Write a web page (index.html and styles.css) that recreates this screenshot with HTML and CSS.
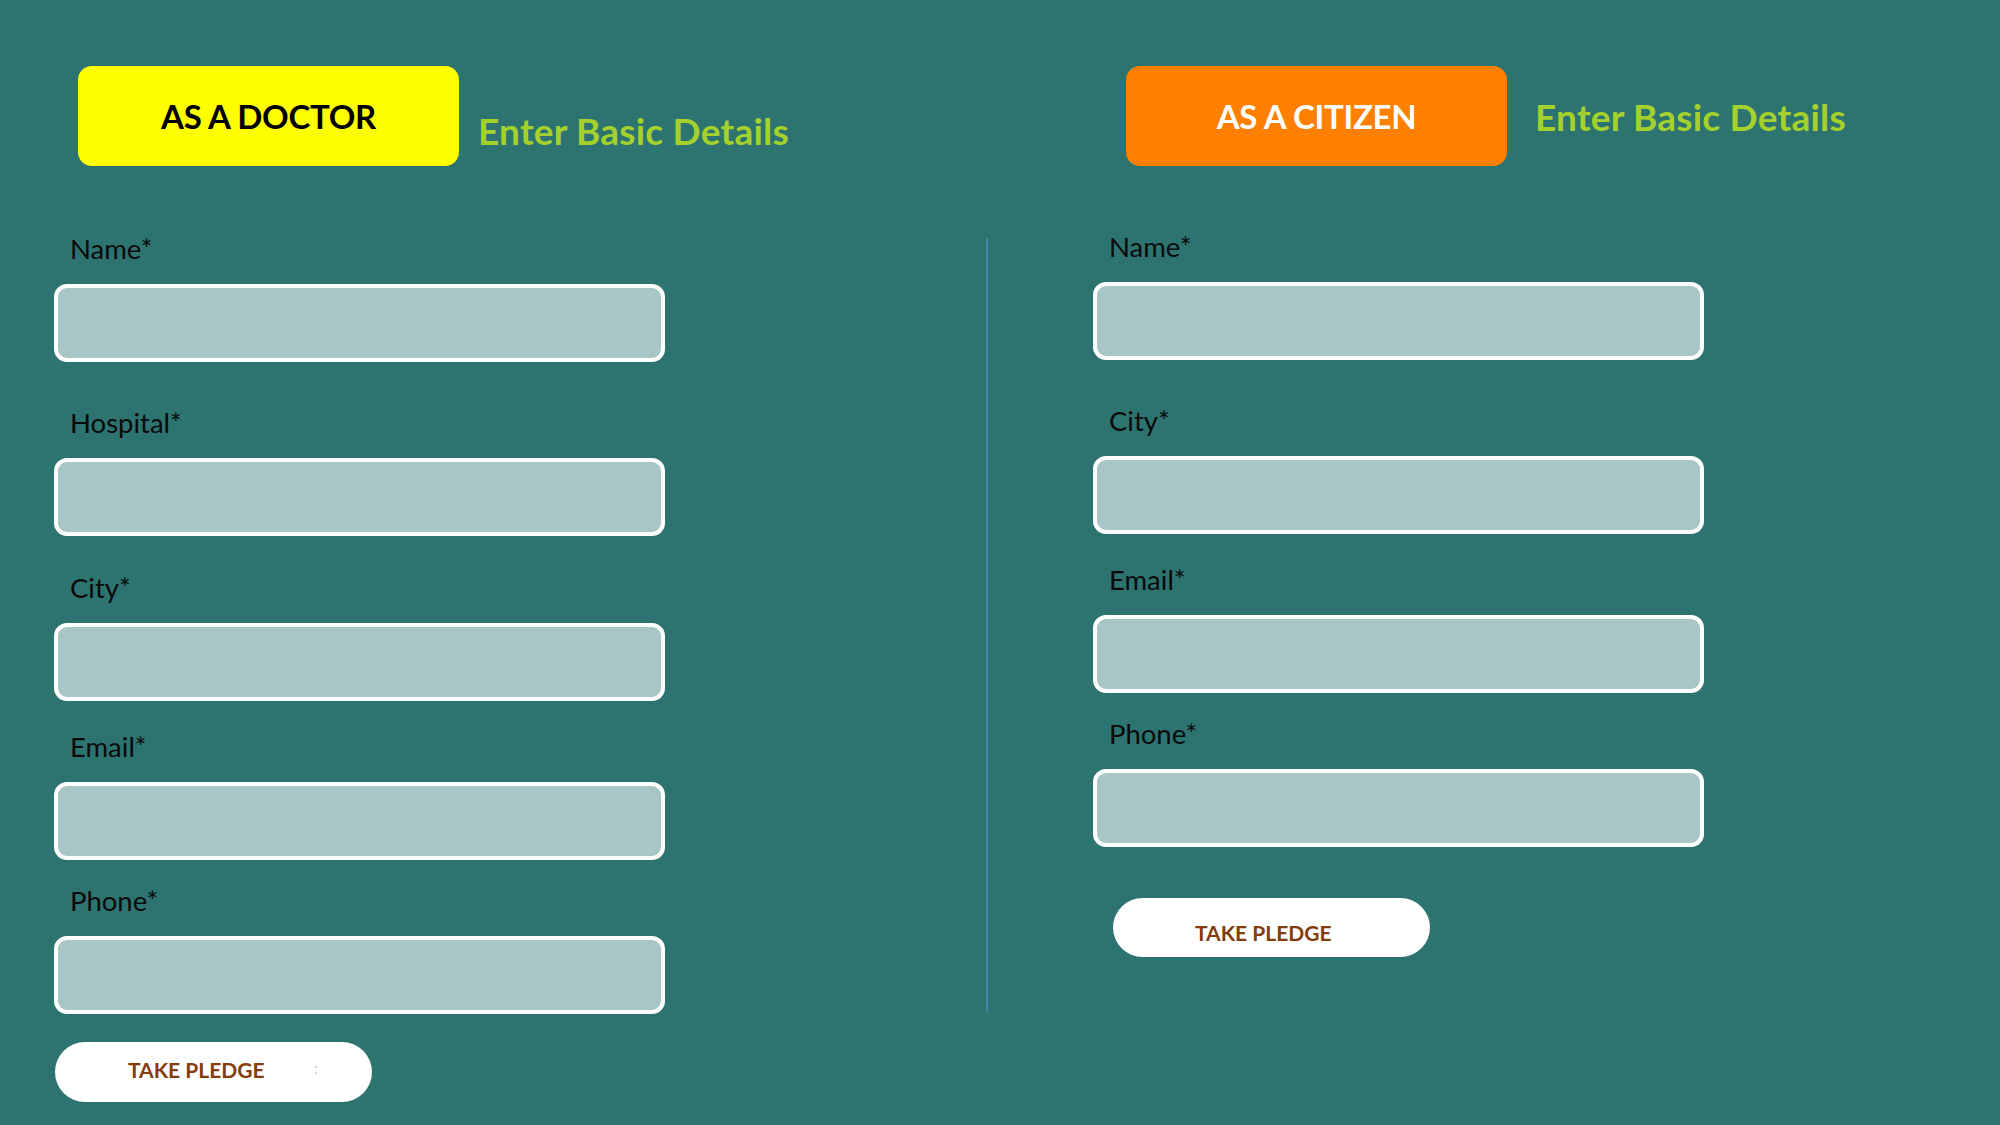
FILE: index.html
```html
<!DOCTYPE html>
<html lang="en">
<head>
<meta charset="utf-8">
<title>Take Pledge</title>
<link rel="stylesheet" href="styles.css">
</head>
<body>
<main class="page">
  <section class="panel panel--doctor">
    <header class="panel-head">
      <div class="role role--doctor">AS A DOCTOR</div>
      <h2 class="head-title head-title--doctor">Enter Basic Details</h2>
    </header>
    <form class="form form--doctor">
      <div class="field">
        <label class="field-label">Name*</label>
        <div class="field-box"></div>
      </div>
      <div class="field gap-xl">
        <label class="field-label">Hospital*</label>
        <div class="field-box"></div>
      </div>
      <div class="field gap-l">
        <label class="field-label">City*</label>
        <div class="field-box"></div>
      </div>
      <div class="field gap-m">
        <label class="field-label">Email*</label>
        <div class="field-box"></div>
      </div>
      <div class="field gap-s">
        <label class="field-label">Phone*</label>
        <div class="field-box"></div>
      </div>
      <button type="button" class="pledge pledge--doctor">TAKE PLEDGE<span class="pledge-mark">:</span></button>
    </form>
  </section>

  <div class="divider"></div>

  <section class="panel panel--citizen">
    <header class="panel-head">
      <div class="role role--citizen">AS A CITIZEN</div>
      <h2 class="head-title head-title--citizen">Enter Basic Details</h2>
    </header>
    <form class="form form--citizen">
      <div class="field">
        <label class="field-label">Name*</label>
        <div class="field-box"></div>
      </div>
      <div class="field gap-xl">
        <label class="field-label">City*</label>
        <div class="field-box"></div>
      </div>
      <div class="field gap-m">
        <label class="field-label">Email*</label>
        <div class="field-box"></div>
      </div>
      <div class="field gap-s">
        <label class="field-label">Phone*</label>
        <div class="field-box"></div>
      </div>
      <button type="button" class="pledge pledge--citizen">TAKE PLEDGE</button>
    </form>
  </section>
</main>
</body>
</html>
```

FILE: styles.css
```css
html, body {
  margin: 0;
  padding: 0;
}

body {
  background: #2d7471;
  font-family: Lato, "Liberation Sans", sans-serif;
  color: #000;
}

.page {
  display: flex;
  width: 2000px;
  height: 1125px;
  overflow: hidden;
}

.panel {
  display: flex;
  flex-direction: column;
  flex-shrink: 0;
}

.panel--doctor {
  width: 986px;
  padding-left: 54px;
  box-sizing: border-box;
}

.panel--citizen {
  padding-left: 105px;
}

.panel-head {
  display: flex;
  align-items: flex-start;
  margin-top: 66px;
}

.role {
  width: 381px;
  height: 100px;
  border-radius: 14px;
  display: flex;
  align-items: center;
  justify-content: center;
  font-weight: 700;
  font-size: 33px;
  letter-spacing: -0.3px;
}

.role--doctor {
  background: #ffff00;
  color: #000;
  margin-left: 24px;
}

.role--citizen {
  background: #ff8000;
  color: #fff;
  margin-left: 33px;
}

.head-title {
  margin: 0;
  font-size: 37px;
  line-height: 1;
  font-weight: 700;
  color: #a4d12b;
  letter-spacing: 0.2px;
}

.head-title--doctor {
  margin-left: 19px;
  margin-top: 46px;
}

.head-title--citizen {
  margin-left: 28px;
  margin-top: 32px;
}

.form {
  display: flex;
  flex-direction: column;
  align-items: flex-start;
}

.form--doctor {
  margin-top: 70px;
}

.form--citizen {
  margin-top: 68px;
}

.field {
  display: flex;
  flex-direction: column;
}

.gap-xl { margin-top: 48px; }
.gap-l { margin-top: 39px; }
.gap-m { margin-top: 33px; }
.gap-s { margin-top: 28px; }

.field-label {
  font-size: 27.5px;
  line-height: 26px;
  height: 26px;
  padding-left: 16px;
  margin-bottom: 22px;
  color: #0a0a0a;
}

.field-box {
  width: 611px;
  height: 78px;
  box-sizing: border-box;
  border: 4px solid #ffffff;
  border-radius: 13px;
  background: #a8c6c6;
}

.pledge {
  display: flex;
  align-items: center;
  width: 317px;
  height: 60px;
  border: none;
  border-radius: 30px;
  background: #ffffff;
  color: #843c0c;
  font-family: Lato, "Liberation Sans", sans-serif;
  font-weight: 700;
  font-size: 21px;
  padding: 0;
  position: relative;
}

.pledge--doctor {
  margin-top: 28px;
  margin-left: 1px;
  padding-left: 73px;
  padding-bottom: 5px;
}

.pledge--citizen {
  margin-top: 51px;
  margin-left: 20px;
  height: 59px;
  padding-left: 82px;
  padding-top: 10px;
}

.pledge-mark {
  position: absolute;
  left: 259px;
  top: 16px;
  font-size: 16px;
  font-weight: 400;
  color: #c8c8c8;
}

.divider {
  align-self: flex-start;
  flex-shrink: 0;
  width: 2px;
  height: 774px;
  margin-top: 238px;
  background: #4a82a3;
}
```
